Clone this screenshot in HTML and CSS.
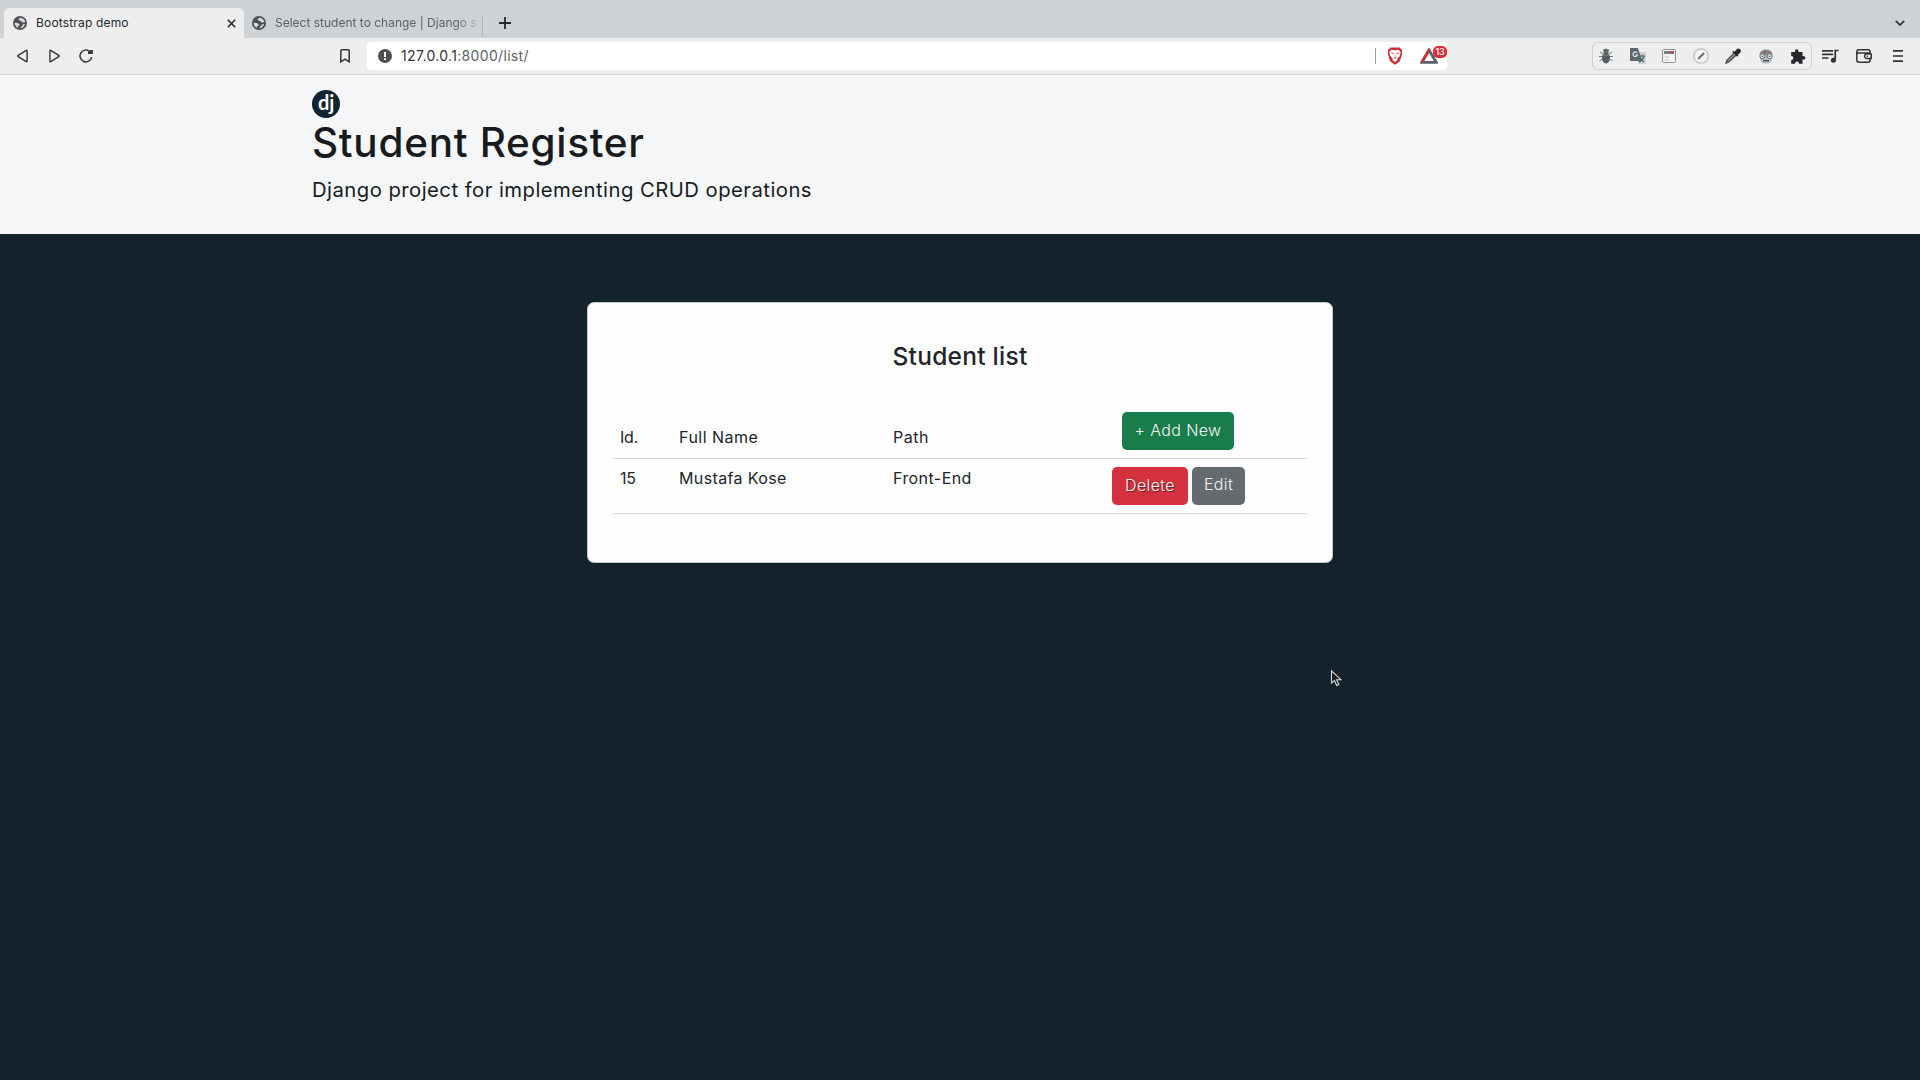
FILE: index.html
```html
<!DOCTYPE html>
<html lang="en">
<head>
<meta charset="utf-8">
<title>Bootstrap demo</title>
<link rel="stylesheet" href="styles.css">
</head>
<body>
<svg class="defs" width="0" height="0"><defs>
<symbol id="globe" viewBox="0 0 14 14"><circle cx="7" cy="7" r="7" fill="#4c5052"/><path d="M7.500 1.700 5.500 3l.7 1.500 2 .5 1.200 1.600 2.900-.4Q11.800 2.200 7.500 1.700zM1.600 6.700l3.200.4 1.900 1.300-.5 1.300-1.200.3.300 2Q1.800 10.800 1.600 6.700zM7.500 12.300l.4-1.600 1.600-1 .3-1.400 2.100-.3Q11.200 11.700 7.500 12.300z" fill="#d7d9da"/></symbol>
</defs></svg>
<div class="tabstrip">
  <div class="tab tab-active">
    <svg class="fav" width="14" height="14"><use href="#globe"/></svg>
    <span class="tab-title t-boot">Bootstrap demo</span>
    <svg class="close" width="9" height="9" viewBox="0 0 9 9"><path d="M.8.8l7.400 7.400M8.200.8.8 8.200" stroke="#26292b" stroke-width="1.600"/></svg>
  </div>
  <div class="tab tab-idle">
    <svg class="fav" width="14" height="14"><use href="#globe"/></svg>
    <span class="tab-title t-select">Select student to change | Django s</span>
  </div>
  <svg class="plus" width="12" height="12" viewBox="0 0 12 12"><path d="M6 0v12M0 6h12" stroke="#26292b" stroke-width="1.800"/></svg>
  <svg class="chev" width="10" height="6" viewBox="0 0 10 6"><path d="M.8.8 5 5 9.200.8" fill="none" stroke="#303335" stroke-width="1.700"/></svg>
</div>
<div class="toolbar">
  <div class="nav">
    <svg width="11" height="14" viewBox="0 0 11 14"><path d="M9.300 1.300Q10.100.9 10.100 1.800v10.400q0 .9-.8.5L1.200 7.600q-.8-.6 0-1.200z" fill="none" stroke="#303335" stroke-width="1.400"/></svg>
    <svg width="11" height="14" viewBox="0 0 11 14"><path d="M1.700 1.300Q.9.9.9 1.800v10.400q0 .9.8.5l8.100-5.100q.8-.6 0-1.200z" fill="none" stroke="#303335" stroke-width="1.400"/></svg>
    <svg width="14" height="14" viewBox="0 0 14 14"><path d="M10.800 2.500A5.900 5.900 0 1 0 12.700 8.200" fill="none" stroke="#303335" stroke-width="1.500"/><path d="M9 4.900h4.800V1.100L11.700 1 9 3z" fill="#303335"/></svg>
  </div>
  <svg class="mark" width="10" height="14" viewBox="0 0 10 14"><path d="M.8 12.800V2q0-1.200 1.200-1.200h6Q9.200.8 9.200 2v10.800L5 10.200z" fill="none" stroke="#303335" stroke-width="1.500"/></svg>
  <div class="address">
    <svg width="14" height="14" viewBox="0 0 14 14"><circle cx="7" cy="7" r="7" fill="#4c5052"/><path d="M6 3h2v5H6zM6 9.200h2v1.900H6z" fill="#fff"/></svg>
    <span class="url">127.0.0.1<span class="path">:8000/list/</span></span>
    <i class="sep"></i>
    <svg class="shield" width="16" height="18" viewBox="0 0 16 18"><path d="M3.500.5h9l1.200 1.400 1.500 1-.4 2 .5 1.300-2 6.800q-.5 1.600-2 2.500L8 17.700l-3.300-2.200q-1.500-.9-2-2.500L.7 6.200l.5-1.300-.4-2 1.500-1z" fill="#cf2a37"/><path d="M4.200 2.800 8 3.300l3.800-.5 2 2.800-1.300 4-2.100 2 .1 1.500L8 14.900l-2.500-1.800.1-1.500-2.100-2-1.300-4z" fill="#fff"/><path d="M4.500 6 6.600 6.700M11.500 6 9.400 6.700M6.600 10.500 8 11.200l1.400-.7" fill="none" stroke="#cf2a37"/><path d="M8 7v3" stroke="#dc8c92" stroke-width=".8"/></svg>
    <div class="rewards">
      <svg width="18" height="16" viewBox="0 0 18 16"><path d="M9 2.200 1.700 14.400h14.600z" fill="none" stroke="#59616a" stroke-width="2.800"/><path d="M9.500 1.200 2.100 13.900" stroke="#d62d39" stroke-width="2.600"/><path d="m9 6.800-3.400 5.600h6.800z" fill="#fff"/></svg>
      <span class="badge">13</span>
    </div>
  </div>
  <div class="exts">
    <svg width="14" height="16" viewBox="0 0 14 16"><path d="M1 4l3 2M13 4l-3 2M0 8.500h14M.5 13 4 10.500M13.500 13 10 10.500M4.500 1l1 2M9.500 1l-1 2" stroke="#73787c"/><circle cx="7" cy="3.400" r="2.700" fill="#62686c"/><ellipse cx="7" cy="10" rx="4" ry="5.400" fill="#555c61"/><path d="M4 7h6" stroke="#7d8488"/></svg>
    <svg width="16" height="16" viewBox="0 0 16 16"><path d="M7 4h9v12H8z" fill="#cfd2d4"/><path d="M0 0h8l4 13H0z" fill="#5d6770"/><path d="M7.300 5A2.300 2.300 0 1 0 7.500 7H5.500" fill="none" stroke="#e5e8e9" stroke-width="1.200"/><path d="M9 8h6M12 6.500V8M14 8q-1 4-5 6M10 9q1 3 4 5" fill="none" stroke="#41685a" stroke-width="1.200"/></svg>
    <svg width="14" height="14" viewBox="0 0 14 14"><rect x=".5" y=".5" width="13" height="13" rx="1" fill="#f3f3f3" stroke="#8c9295"/><path d="M2 2h10v3H2z" fill="#777d81"/><path d="M7.500 3.500H12" stroke="#d62d39"/><path d="M2.500 8h5M2.500 11h4" stroke="#c5c9cb"/></svg>
    <svg width="16" height="16" viewBox="0 0 16 16"><circle cx="8" cy="8" r="7.200" fill="#f4f4f4" stroke="#b9bdc0" stroke-width="1.300"/><path d="m5 11 .5-1.500 4.700-4.700 1.200 1.200-4.800 4.600z" fill="#70777b" stroke="#70777b"/></svg>
    <svg width="16" height="16" viewBox="0 0 16 16"><path d="m9.500 4.800-7.300 7.400-1 2.700 2.700-1 7.500-7.300" fill="#a9afb2" stroke="#4d5559" stroke-width="1.500"/><path d="m7.800 3.300 5 4.900M9.800 4.900l2.400-2.800q1.200-1.200 2.300-.1t0 2.200l-2.800 2.600z" fill="#25282a" stroke="#25282a" stroke-width="1.800"/></svg>
    <svg width="16" height="15" viewBox="0 0 16 15"><path d="M1.500 6Q2 .5 8 .5T14.500 6z" fill="#80878b"/><path d="M2 6h12v5l-3 3.500H5L2 11z" fill="#b5babd"/><circle cx="4.400" cy="7.200" r="2.500" fill="#e8eaeb" stroke="#62696d"/><circle cx="11.600" cy="7.200" r="2.500" fill="#e8eaeb" stroke="#62696d"/><path d="M3.700 7.200h1.500M10.800 7.200h1.500M5 11.800h6" stroke="#555c60" stroke-width="1.500"/><circle cx="7" cy="3.300" r="1" fill="#d62d39"/></svg>
    <svg width="16" height="15" viewBox="0 0 16 15"><path d="M1.200 3H5q-.3-2.800 1.700-2.800T8.500 3h4v3.900q3-.1 3 1.800t-3 1.900v4.200H9q.1-2.200-2-2.200t-2 2.200H1.200V11q2.200.1 2.200-2T1.200 7z" fill="#26292b"/></svg>
  </div>
  <div class="tools">
    <svg width="17" height="14" viewBox="0 0 17 14"><path d="M0 1.800h11M0 5.400h11M0 9h6.500M13.200 11V1.500H16.500" fill="none" stroke="#303335" stroke-width="1.700"/><circle cx="11.400" cy="11.200" r="2.500" fill="#303335"/></svg>
    <svg width="16" height="14" viewBox="0 0 16 14"><path d="M14 4V2.800Q14 .8 12 .8H3Q.8.8.8 3v8q0 2.200 2.200 2.200h9q2 0 2-2V10M1 4h11.500q1.500 0 1.500 1.200M15.200 5v4.500H10.500Q8.500 9.200 8.500 7.300T10.500 5z" fill="none" stroke="#303335" stroke-width="1.500"/><circle cx="11.300" cy="7.300" r=".8" fill="#303335"/></svg>
    <svg width="10" height="12" viewBox="0 0 10 12"><path d="M0 .9h10M0 6h10M0 11.100h10" stroke="#303335" stroke-width="1.600"/></svg>
  </div>
</div>
<header class="hero">
  <div class="logo"><span>dj</span></div>
  <h1>Student Register</h1>
  <p>Django project for implementing CRUD operations</p>
</header>
<main>
  <section class="card">
    <h2>Student list</h2>
    <div class="row head">
      <span class="c-id">Id.</span><span class="c-name">Full Name</span><span class="c-path">Path</span>
      <div class="actions"><a class="btn add"><span>+ Add New</span></a></div>
    </div>
    <div class="row">
      <span class="v-id">15</span><span class="v-name">Mustafa Kose</span><span class="v-path">Front-End</span>
      <div class="actions"><a class="btn del"><span>Delete</span></a><a class="btn edit"><span>Edit</span></a></div>
    </div>
  </section>
</main>
<svg class="cursor" width="13" height="19" viewBox="0 0 13 19"><path d="M1.500 1.800v12.300l2.900-2.700 2.300 5 2.200-1-2.300-4.700h4.200z" fill="#17191b" stroke="#d9dcde" stroke-width="1.100"/></svg>
</body>
</html>
```
FILE: styles.css
```css
* { box-sizing: border-box; }
body { margin: 0; width: 1920px; height: 1080px; overflow: hidden; background: #14222c; font-family: Inter, "Open Sans", sans-serif; color: #212529; display: flex; flex-direction: column; }
svg { display: block; flex: none; }
.defs { position: absolute; }

.tabstrip { height: 38px; background: #ced2d5; display: flex; padding-left: 4px; align-items: flex-end; flex: none; }
.tab { display: flex; align-items: center; height: 30px; font-size: 12px; white-space: nowrap; }
.tab-active { width: 240px; background: #eeeeef; border-radius: 5px 5px 0 0; padding: 0 8px 0 9px; color: #26292b; }
.tab-idle { width: 239px; padding-left: 8px; color: #5c6164; position: relative; }
.tab-idle::after { content: ""; position: absolute; right: 0; top: 7px; width: 1px; height: 22px; background: #b0b4b7; }
.tab-title { margin-left: 9px; line-height: 16px; }
.t-boot { letter-spacing: .17px; }
.t-select { -webkit-mask-image: linear-gradient(90deg, #000 90%, transparent 102%); mask-image: linear-gradient(90deg, #000 90%, transparent 102%); }
.close { margin-left: auto; }
.plus { margin: 0 0 9px 16px; }
.chev { margin: 0 15px 12px auto; }

.toolbar { height: 37px; background: #eeeeef; border-bottom: 1px solid #d3d6d8; display: flex; align-items: center; flex: none; }
.nav { display: flex; gap: 21px; padding-left: 17px; }
.nav svg:last-child { margin-left: -2px; }
.mark { margin-left: 247px; }
.address { margin-left: 17px; width: 1080px; height: 28px; background: #fff; border-radius: 4px; display: flex; align-items: center; padding-left: 11px; flex: none; }
.url { margin-left: 9px; font-size: 14px; line-height: 20px; color: #303335; letter-spacing: .33px; }
.path { color: #5c6164; }
.sep { width: 1px; height: 16px; background: #999da0; margin-left: auto; }
.shield { margin-left: 11px; }
.rewards { width: 27px; height: 28px; margin-left: 17px; padding-top: 6px; position: relative; }
.badge { position: absolute; left: 13px; top: 4px; width: 14px; height: 12px; border-radius: 5px; background: #d62d39; color: #fff; font-size: 9px; line-height: 12px; text-align: center; font-weight: 500; letter-spacing: -.2px; }
.exts { margin-left: 145px; width: 220px; height: 28px; border: 1px solid #cdd1d3; border-radius: 5px; display: flex; align-items: center; justify-content: space-between; padding: 0 5px 0 6px; }
.tools { margin-left: 10px; display: flex; align-items: center; gap: 17px; }
.tools svg:last-child { margin-left: 4px; }

.hero { height: 159px; background: #f4f6f8; padding: 15px 0 0 312px; flex: none; }
.logo { width: 28px; height: 28px; border-radius: 50%; background: #112530; color: #fff; text-align: center; font: 700 20px/25px Lato, sans-serif; letter-spacing: -.3px; }
h1 { margin: 1px 0 0; font-size: 40.500px; line-height: 48px; font-weight: 500; white-space: nowrap; color: #181b1e; letter-spacing: .7px; }
.hero p { margin: 8px 0 0; font-size: 20.300px; line-height: 30px; white-space: nowrap; color: #181b1e; letter-spacing: .46px; }

main { display: flex; justify-content: center; padding-top: 68px; }
.card { width: 746px; height: 261px; background: #fdfdfd; border: 1px solid #c3c8cb; border-radius: 7px; padding: 38px 24px 0; }
h2 { margin: 0; font-size: 24.500px; line-height: 30px; font-weight: 500; text-align: center; letter-spacing: .26px; }
.row { display: grid; grid-template-columns: 59px 214px 219px minmax(0, 1fr); padding: 8px 0 0 8px; height: 55px; border-bottom: 1px solid #dadddf; font-size: 16px; line-height: 24px; white-space: nowrap; }
.row > span { justify-self: start; line-height: 22px; }
.head { margin-top: 33px; padding-top: 8px; }
.head > span { margin-top: 14px; }
.c-id, .v-id { letter-spacing: -.2px; }
.c-name { letter-spacing: .48px; }
.c-path { letter-spacing: .5px; }
.v-name { letter-spacing: .37px; }
.v-path { letter-spacing: .43px; }
.actions { display: flex; gap: 4px; align-items: flex-start; }
.btn { height: 38px; border-radius: 5px; color: #f4f6f6; line-height: 36px; text-align: center; flex: none; font-weight: 300; letter-spacing: .38px; }
.add { width: 112px; margin-left: 10px; background: #187d4b; }
.del { width: 76px; background: #d5303e; text-shadow: 1px 1px 1px #5b2028; }
.edit { width: 53px; background: #646a6e; line-height: 34px; }
.cursor { position: absolute; left: 1330px; top: 669px; }
```
